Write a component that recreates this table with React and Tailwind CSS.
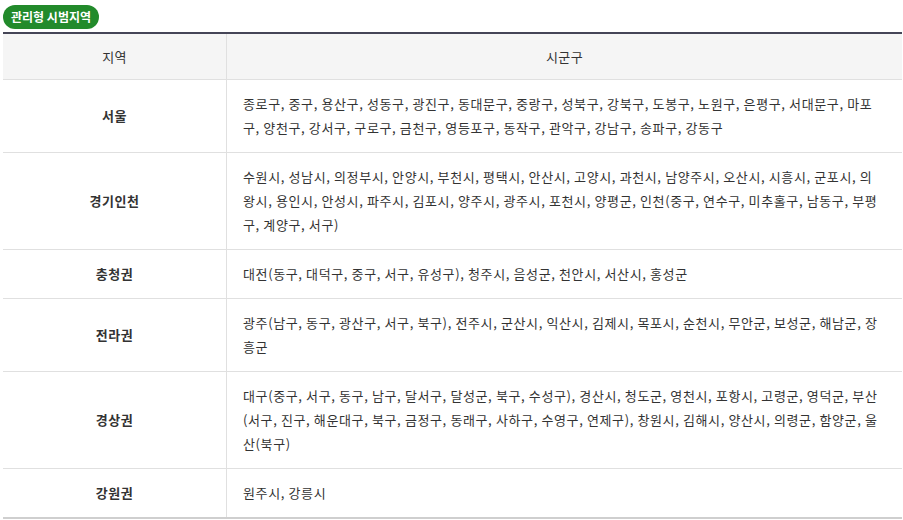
import React from "react";

const rows = [
  {
    name: "서울",
    lines: [
      "종로구, 중구, 용산구, 성동구, 광진구, 동대문구, 중랑구, 성북구, 강북구, 도봉구, 노원구, 은평구, 서대문구, 마포",
      "구, 양천구, 강서구, 구로구, 금천구, 영등포구, 동작구, 관악구, 강남구, 송파구, 강동구",
    ],
  },
  {
    name: "경기인천",
    lines: [
      "수원시, 성남시, 의정부시, 안양시, 부천시, 평택시, 안산시, 고양시, 과천시, 남양주시, 오산시, 시흥시, 군포시, 의",
      "왕시, 용인시, 안성시, 파주시, 김포시, 양주시, 광주시, 포천시, 양평군, 인천(중구, 연수구, 미추홀구, 남동구, 부평",
      "구, 계양구, 서구)",
    ],
  },
  {
    name: "충청권",
    lines: ["대전(동구, 대덕구, 중구, 서구, 유성구), 청주시, 음성군, 천안시, 서산시, 홍성군"],
  },
  {
    name: "전라권",
    lines: [
      "광주(남구, 동구, 광산구, 서구, 북구), 전주시, 군산시, 익산시, 김제시, 목포시, 순천시, 무안군, 보성군, 해남군, 장",
      "흥군",
    ],
  },
  {
    name: "경상권",
    lines: [
      "대구(중구, 서구, 동구, 남구, 달서구, 달성군, 북구, 수성구), 경산시, 청도군, 영천시, 포항시, 고령군, 영덕군, 부산",
      "(서구, 진구, 해운대구, 북구, 금정구, 동래구, 사하구, 수영구, 연제구), 창원시, 김해시, 양산시, 의령군, 함양군, 울",
      "산(북구)",
    ],
  },
  {
    name: "강원권",
    lines: ["원주시, 강릉시"],
  },
];

function App() {
  return (
    <div
      className="bg-white w-[903px] h-[520px] overflow-hidden pl-[3px] pt-[3px] text-[#333]"
      style={{ fontFamily: '"Noto Sans CJK KR", "Noto Sans", sans-serif' }}
    >
      <div className="inline-flex items-center h-[24px] px-[8px] rounded-full bg-[#228a2b] text-white text-[12px] font-bold leading-none">
        관리형 시범지역
      </div>

      <div className="mt-[3px] w-[899px] border-t-2 border-[#454557] border-b-2 border-b-[#cfcfcf]">
        <div className="grid grid-cols-[224px_1fr] bg-[#f5f5f5] border-b border-[#e0e0e0] h-[46px] text-[13px] tracking-[0.4px]">
          <div className="flex items-center justify-center border-r border-[#e0e0e0]">지역</div>
          <div className="flex items-center justify-center">시군구</div>
        </div>
        {rows.map((row, i) => (
          <div
            key={row.name}
            className={
              "grid grid-cols-[224px_1fr] text-[13px] leading-[24px] " +
              (i < rows.length - 1 ? "border-b border-[#e0e0e0]" : "")
            }
          >
            <div className="flex items-center justify-center font-bold tracking-[0.6px] border-r border-[#e0e0e0]">
              {row.name}
            </div>
            <div className="py-[12px] pl-[16px] whitespace-nowrap tracking-[0.62px]">
              {row.lines.map((line, j) => (
                <div key={j}>{line}</div>
              ))}
            </div>
          </div>
        ))}
      </div>
    </div>
  );
}

export default App;
